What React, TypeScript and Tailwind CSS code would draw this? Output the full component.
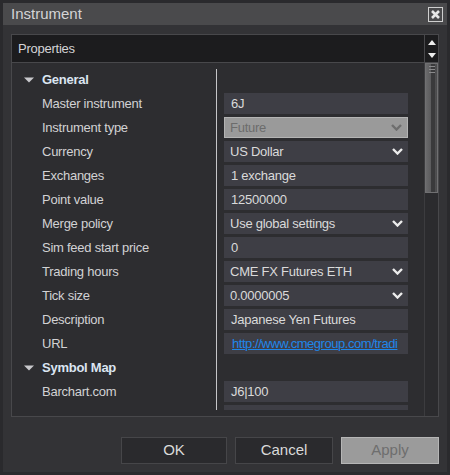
type Row =
  | { kind: "group"; label: string }
  | { kind: "text"; label: string; value: string }
  | { kind: "combo"; label: string; value: string; disabled?: boolean }
  | { kind: "link"; label: string; value: string }
  | { kind: "blank" };

const rows: Row[] = [
  { kind: "group", label: "General" },
  { kind: "text", label: "Master instrument", value: "6J" },
  { kind: "combo", label: "Instrument type", value: "Future", disabled: true },
  { kind: "combo", label: "Currency", value: "US Dollar" },
  { kind: "text", label: "Exchanges", value: "1 exchange" },
  { kind: "text", label: "Point value", value: "12500000" },
  { kind: "combo", label: "Merge policy", value: "Use global settings" },
  { kind: "text", label: "Sim feed start price", value: "0" },
  { kind: "combo", label: "Trading hours", value: "CME FX Futures ETH" },
  { kind: "combo", label: "Tick size", value: "0.0000005" },
  { kind: "text", label: "Description", value: "Japanese Yen Futures" },
  { kind: "link", label: "URL", value: "http://www.cmegroup.com/tradi" },
  { kind: "group", label: "Symbol Map" },
  { kind: "text", label: "Barchart.com", value: "J6|100" },
  { kind: "blank" },
];

function Chevron({ color }: { color: string }) {
  return (
    <svg width="11" height="7" viewBox="0 0 11 7" className="shrink-0">
      <polyline points="1,1 5.5,5.5 10,1" fill="none" stroke={color} strokeWidth="2.4" />
    </svg>
  );
}

function Triangle() {
  return (
    <svg width="10" height="6" viewBox="0 0 10 6" className="shrink-0">
      <polygon points="0,0.5 10,0.5 5,5.5" fill="#c9c9cc" />
    </svg>
  );
}

function Value({ row }: { row: Row }) {
  if (row.kind === "group") return null;
  if (row.kind === "combo" && row.disabled) {
    return (
      <div className="ml-[7px] flex h-[21px] w-[184px] items-center justify-between border border-[#b4b4b4] bg-[#9a9a9a] pl-[5px] pr-[5px] text-[#6c6c6c]">
        <span>{row.value}</span>
        <Chevron color="#6e6e6e" />
      </div>
    );
  }
  if (row.kind === "combo") {
    return (
      <div className="ml-[7px] flex h-[21px] w-[184px] items-center justify-between bg-[#3e3e45] pl-[6px] pr-[5px] text-[#dadada]">
        <span>{row.value}</span>
        <Chevron color="#ececec" />
      </div>
    );
  }
  if (row.kind === "link") {
    return (
      <div className="ml-[7px] flex h-[21px] w-[184px] items-center bg-[#3e3e45] pl-[8px]">
        <span className="whitespace-nowrap tracking-[-0.45px] text-[#1e86ea] underline">{row.value}</span>
      </div>
    );
  }
  return (
    <div className="ml-[7px] flex h-[21px] w-[184px] items-center bg-[#3e3e45] pl-[7px] text-[#dadada]">
      {row.kind === "text" ? row.value : ""}
    </div>
  );
}

export default function App() {
  return (
    <div
      className="h-[475px] w-[450px] bg-[#2a2a2d] p-[3px] text-[13px] tracking-[-0.25px]"
      style={{ fontFamily: '"Liberation Sans", Arial, sans-serif' }}
    >
      <div className="flex h-full flex-col bg-[#333336]">
        {/* title bar */}
        <div className="flex h-[22px] items-center justify-between bg-[#4a4a4c] pl-[8px] pr-[4px]">
          <span className="text-[15px] tracking-normal text-[#d4d4d6]">Instrument</span>
          <div className="flex h-[15px] w-[15px] items-center justify-center border-[1.5px] border-[#cfcfcf]">
            <svg width="11" height="11" viewBox="0 0 11 11">
              <path d="M2 2 L9 9 M9 2 L2 9" stroke="#e6e6e6" strokeWidth="2.6" />
            </svg>
          </div>
        </div>

        {/* property grid */}
        <div className="ml-[8px] mt-[9px] flex h-[383px] w-[428px] flex-col border border-[#48484b] bg-[#2d2d30]">
          <div className="flex h-[28px] border-b border-[#48484b] bg-[#1c1c1e]">
            <div className="flex flex-1 items-center pl-[6px] text-[#d4d4d6]">Properties</div>
            <div className="flex w-[14px] flex-col items-center justify-center gap-[8px] border-l border-[#48484b]">
              <svg width="8" height="5" viewBox="0 0 8 5">
                <polygon points="4,0 8,5 0,5" fill="#eeeeee" />
              </svg>
              <svg width="8" height="5" viewBox="0 0 8 5">
                <polygon points="0,0 8,0 4,5" fill="#eeeeee" />
              </svg>
            </div>
          </div>

          <div className="flex flex-1">
            <div className="flex-1">
              <div className="h-[347px] overflow-hidden pt-[6px]">
                {rows.map((row, i) => (
                  <div key={i} className="flex h-[24px]">
                    <div className="h-full w-[205px] border-r border-[#c6c6c8]">
                      {row.kind === "group" ? (
                        <div className="flex h-[21px] items-center pl-[12px] font-bold text-[#dbe5f2]">
                          <Triangle />
                          <span className="ml-[8px]">{row.label}</span>
                        </div>
                      ) : row.kind === "blank" ? null : (
                        <div className="flex h-[21px] items-center pl-[30px] text-[#d2d2d4]">{row.label}</div>
                      )}
                    </div>
                    <Value row={row} />
                  </div>
                ))}
              </div>
            </div>

            {/* scrollbar */}
            <div className="w-[14px] border-l border-[#3c3c3f] bg-[#2b2b2e]">
              <div className="relative flex h-[130px] border border-[#707072] bg-gradient-to-r from-[#6a6a6c] to-[#4a4a4c]">
                <div className="ml-auto mr-[2px] h-full w-[4px] bg-[#3a3a3c]" />
                <div className="absolute left-[3px] top-[2px] flex flex-col gap-[2px]">
                  <div className="h-px w-[6px] bg-[#8a8a8c]" />
                  <div className="h-px w-[6px] bg-[#8a8a8c]" />
                  <div className="h-px w-[6px] bg-[#8a8a8c]" />
                </div>
              </div>
            </div>
          </div>
        </div>

        {/* buttons */}
        <div className="ml-[118px] mt-[20px] flex gap-[8px] text-[15px] tracking-normal">
          <button className="h-[27px] w-[106px] border border-[#464649] bg-[#2a2a2d] text-[#dadada]">OK</button>
          <button className="h-[27px] w-[98px] border border-[#464649] bg-[#2a2a2d] text-[#dadada]">Cancel</button>
          <button className="h-[27px] w-[98px] border border-[#b6b6b6] bg-[#9b9b9b] text-[#6e6e6e]">Apply</button>
        </div>
      </div>
    </div>
  );
}
